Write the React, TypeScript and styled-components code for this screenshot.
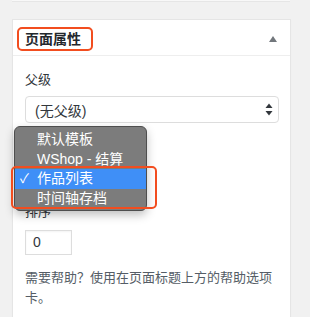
import React from 'react'
import styled, { createGlobalStyle } from 'styled-components'

const GlobalStyle = createGlobalStyle`
  html, body {
    margin: 0;
    padding: 0;
    background: #f1f1f1;
  }
  body {
    font-family: 'Liberation Sans', 'Noto Sans CJK SC', sans-serif;
    color: #23282d;
    -webkit-font-smoothing: antialiased;
  }
`

const Page = styled.div`
  width: 310px;
  height: 317px;
  overflow: hidden;
`

const PrevBox = styled.div`
  margin-left: 12px;
  width: 278px;
  height: 1px;
  background: #f8f8f8;
  border-bottom: 1px solid #e6e6e6;
`

const Card = styled.div`
  position: relative;
  box-sizing: border-box;
  width: 279px;
  margin: 17px 0 0 12px;
  background: #fff;
  border: 1px solid #e5e5e5;
  box-shadow: 0 1px 1px rgba(0, 0, 0, 0.04);
`

const Header = styled.div`
  display: flex;
  align-items: center;
  justify-content: space-between;
  height: 35px;
  padding: 0 13px 0 4px;
  border-bottom: 1px solid #eee;
`

const Mark = styled.div`
  display: inline-flex;
  align-items: center;
  box-sizing: border-box;
  height: 24px;
  margin-top: 3px;
  padding: 0 10px 0 6px;
  border: 2px solid #f24d1f;
  border-radius: 5px;
`

const Title = styled.h2`
  margin: 0;
  font-size: 14px;
  font-weight: 700;
  line-height: 20px;
  color: #23282d;
`

const Toggle = styled.span`
  width: 0;
  height: 0;
  border-left: 4.5px solid transparent;
  border-right: 4.5px solid transparent;
  border-bottom: 6px solid #72777c;
  margin-top: 2px;
`

const Body = styled.div`
  padding: 14px 10px 40px 12px;
`

const Label = styled.p<{ $gap?: number }>`
  margin: ${({ $gap }) => $gap ?? 0}px 0 0;
  font-size: 13px;
  line-height: 20px;
  color: #32373c;
`

const Select = styled.div`
  display: flex;
  align-items: center;
  justify-content: space-between;
  box-sizing: border-box;
  width: 254px;
  height: 27px;
  margin-top: 6px;
  padding: 0 5px 0 9px;
  border: 1px solid #ddd;
  border-radius: 4px;
  background: #fff;
  font-size: 14px;
  color: #32373c;
`

const Input = styled.div`
  box-sizing: border-box;
  width: 47px;
  height: 25px;
  margin-top: 8px;
  padding: 0 7px;
  border: 1px solid #ddd;
  box-shadow: inset 0 1px 2px rgba(0, 0, 0, 0.05);
  font-size: 14px;
  line-height: 23px;
  color: #32373c;
`

const Help = styled.p`
  margin: 13px 0 0;
  font-size: 13px;
  line-height: 20px;
  color: #555d66;
`

const Menu = styled.ul`
  position: absolute;
  left: 1px;
  top: 106px;
  box-sizing: border-box;
  width: 133px;
  margin: 0;
  padding: 3px 0 2px;
  list-style: none;
  background: #7c7c7c;
  border: 1px solid #4e4e4e;
  border-radius: 6px;
  box-shadow: 0 4px 10px rgba(0, 0, 0, 0.25);
`

const Item = styled.li<{ $active?: boolean }>`
  position: relative;
  height: 19.5px;
  padding-left: 22px;
  font-size: 14px;
  line-height: 19.5px;
  color: #fff;
  white-space: nowrap;
  background: ${({ $active }) => ($active ? '#3f8ff7' : 'transparent')};
`

const Check = styled.span`
  position: absolute;
  left: 5px;
  top: 0;
  font-size: 13px;
`

const Highlight = styled.div`
  position: absolute;
  left: -2px;
  top: 146px;
  box-sizing: border-box;
  width: 146px;
  height: 43px;
  border: 2px solid #f24d1f;
  border-radius: 5px;
  pointer-events: none;
`

const Arrows = () => (
  <svg width="8" height="13" viewBox="0 0 8 13">
    <path d="M4 0.5 L7.5 5 H0.5 Z" fill="#32373c" />
    <path d="M4 12.5 L7.5 8 H0.5 Z" fill="#32373c" />
  </svg>
)

const templates = ['默认模板', 'WShop - 结算', '作品列表', '时间轴存档']

export default function App() {
  return (
    <Page>
      <GlobalStyle />
      <PrevBox />
      <Card>
        <Header>
          <Mark>
            <Title>页面属性</Title>
          </Mark>
          <Toggle />
        </Header>
        <Body>
          <Label>父级</Label>
          <Select>
            <span>(无父级)</span>
            <Arrows />
          </Select>
          <Label $gap={79}>排序</Label>
          <Input>0</Input>
          <Help>需要帮助？使用在页面标题上方的帮助选项卡。</Help>
        </Body>
        <Menu>
          {templates.map((t) => (
            <Item key={t} $active={t === '作品列表'}>
              {t === '作品列表' && <Check>✓</Check>}
              {t}
            </Item>
          ))}
        </Menu>
        <Highlight />
      </Card>
    </Page>
  )
}
